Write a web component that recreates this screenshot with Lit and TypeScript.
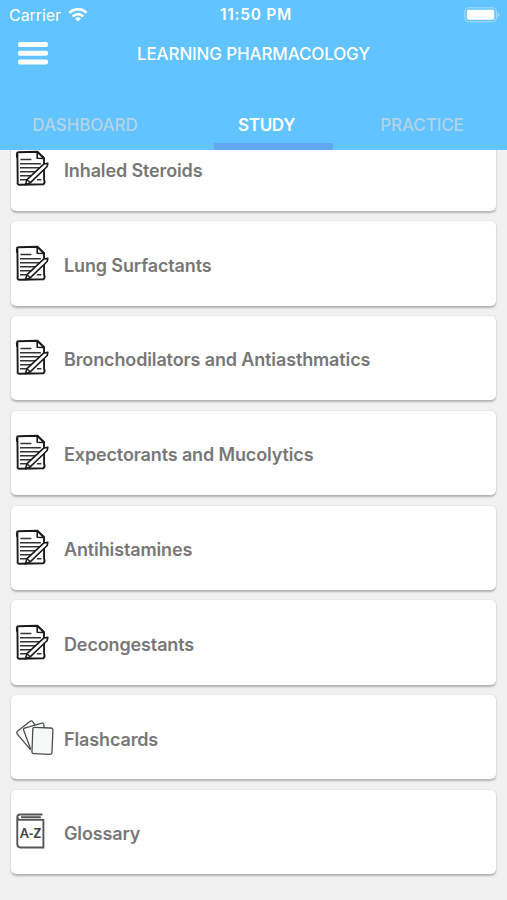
import { LitElement, html, css, svg } from "lit";
import { customElement, property } from "lit/decorators.js";

const noteIcon = svg`
  <g transform="translate(-.6 .9)">
  <path d="M2 3 Q1 1.3 3 1.3 L22 .8 L28.6 7 L28.7 29 Q30 31.5 28 33.4 L4 33.8 Q1.6 34 2.3 31 Z" fill="#fff" stroke="#1a1a1a" stroke-width="1.9" stroke-linejoin="round"/>
  <path d="M1.2 3 L1.7 7 M21.8 1 L21.8 7.4 L28.4 7.6 Z" fill="#fff" stroke="#1a1a1a" stroke-width="1.6" stroke-linejoin="round"/>
  <path d="M5 8.6H16 M4.6 12.8H25.5 M4.6 16.8H25 M4.6 20.8H21 M4.6 24.8H17 M4.6 28.8H13 M21.5 28.8H26" stroke="#333" stroke-width="1.5" fill="none"/>
  <path d="M28 13.4 L32.4 12.4 L31.8 15.6 L15 31.8 L10 33.8 L11.6 28.8 Z" fill="#fff" stroke="#1a1a1a" stroke-width="1.6" stroke-linejoin="round"/>
  <path d="M11.6 28.8 L15 31.8" stroke="#1a1a1a" stroke-width="1.2"/>
  </g>
`;

const cardsIcon = svg`
  <g fill="#fff" stroke="#4a4f50" stroke-width="1.3" transform="translate(0 -.9)">
    <path d="M14.4 31.5 L1 15.6 Q.2 14.2 1.4 13.2 L14.2 3.2 Q15.8 2.2 16.8 3.8 L20 8"/>
    <path d="M14.8 31.4 L7.6 12 Q7.2 10.4 8.6 9.9 L26 5 Q27.2 4.8 27.6 6 L28.4 10"/>
    <path d="M18.8 9.2 L34.9 9.9 Q37 10 36.9 12 L36 34 Q35.9 36.4 33.8 36.3 L18 35.6 Q15.9 35.5 16 33.4 L16.8 11.2 Q16.9 9.1 18.8 9.2 Z" fill="#f7f9f8"/>
  </g>
`;

const bookIcon = svg`
  <g transform="translate(0 -.1)">
  <path d="M26.5 1.6 H4 Q1.3 1.6 1.3 4.2 V31.2 Q1.3 34.6 4.4 34.6 H27.4 V7 H4.2 Q1.5 7 1.5 4.4 M5 4.4 H24.8" fill="none" stroke="#555" stroke-width="1.9"/>
  <g fill="#444" font-family="Lato, sans-serif" font-weight="900" font-size="13.5">
    <text x="14.6" y="25.2" text-anchor="middle" textLength="21" lengthAdjust="spacingAndGlyphs">A-Z</text>
  </g>
  </g>
`;

const icons = { note: noteIcon, cards: cardsIcon, book: bookIcon };
type IconName = keyof typeof icons;

@customElement("topic-card")
class TopicCard extends LitElement {
  @property() label = "";
  @property() icon: IconName = "note";

  static styles = css`
    :host {
      display: flex;
      align-items: center;
      flex: none;
      box-sizing: border-box;
      height: 84.3px;
      padding: 4.4px 5px 0;
      background: #fff;
      border-radius: 5px;
      box-shadow: 0 1.5px 2px rgba(0, 0, 0, 0.25), 0 0 1.5px rgba(0, 0, 0, 0.1);
    }
    svg {
      flex: none;
      width: 38px;
      height: 38px;
      margin: -4px 10px 0 0;
      overflow: visible;
    }
    .label {
      font: 600 18px/24px Inter, sans-serif;
      letter-spacing: -0.13px;
      color: #777;
      white-space: nowrap;
    }
  `;

  render() {
    return html`<svg viewBox="0 0 38 38">${icons[this.icon]}</svg><span class="label">${this.label}</span>`;
  }
}

@customElement("app-root")
class AppRoot extends LitElement {
  static styles = css`
    :host {
      display: flex;
      flex-direction: column;
      height: 900px;
      overflow: hidden;
      background: #f1f1f1;
      font-family: Inter, sans-serif;
      color: #fff;
    }
    header {
      flex: none;
      height: 150px;
      display: flex;
      flex-direction: column;
      background: #61c3ff;
      z-index: 1;
    }
    .status, .bar {
      display: grid;
      grid-template-columns: 1fr auto 1fr;
      align-items: center;
    }
    .status { height: 29px; padding: 0 7px 0 9px; font-size: 16px; }
    .carrier { display: flex; align-items: center; gap: 7px; letter-spacing: -0.05px; }
    .wifi { width: 20px; height: 14px; }
    .time { font-weight: 600; font-size: 15.5px; letter-spacing: 0.75px; margin-left: 3px; line-height: 20px; }
    .battery { width: 36px; height: 16px; justify-self: end; }
    .bar { height: 48px; padding: 0 18px; }
    .menu { width: 30px; height: 23px; }
    .title { font-size: 17px; font-weight: 550; letter-spacing: -0.14px; padding-top: 1px; }
    .tabs {
      margin-top: auto;
      display: grid;
      grid-template-columns: 170px 1fr 170px;
      height: 52px;
    }
    .tab {
      display: flex;
      flex-direction: column;
      align-items: center;
      justify-content: space-between;
      padding-top: 14.5px;
      font-size: 17px;
      line-height: 24px;
      font-weight: 550;
      letter-spacing: -0.1px;
      color: #b4d3e6;
    }
    .active { color: #fff; font-weight: 600; letter-spacing: -0.3px; padding-left: 26px; }
    .line { width: 119px; height: 7px; margin-left: 14px; align-self: center; background: #61a8f4; }
    main {
      display: flex;
      flex-direction: column;
      gap: 10.5px;
      margin-top: -23.6px;
      padding: 0 11px;
    }
  `;

  render() {
    const topics: [string, IconName][] = [
      ["Inhaled Steroids", "note"],
      ["Lung Surfactants", "note"],
      ["Bronchodilators and Antiasthmatics", "note"],
      ["Expectorants and Mucolytics", "note"],
      ["Antihistamines", "note"],
      ["Decongestants", "note"],
      ["Flashcards", "cards"],
      ["Glossary", "book"],
    ];
    return html`
      <header>
        <div class="status">
          <span class="carrier">Carrier
            <svg class="wifi" viewBox="0 0 20 14" fill="none" stroke="#fff" stroke-width="2.6">
              <path d="M1.3 4.8 Q10 -2.6 18.7 4.8 M4.7 8.4 Q10 3.8 15.3 8.4"/>
              <path d="M10 13.5 L7 10.6 Q10 8 13 10.6 Z" fill="#fff" stroke="none"/>
            </svg>
          </span>
          <span class="time">11:50 PM</span>
          <svg class="battery" viewBox="0 0 36 16">
            <rect x=".8" y=".8" width="31.6" height="14" rx="3.6" fill="none" stroke="#a8ddff" stroke-width="1"/>
            <rect x="2.8" y="2.8" width="27.5" height="10" rx="1.7" fill="#fff"/>
            <path d="M33.8 5.3 Q37 7.8 33.8 10.3 Z" fill="#a8ddff"/>
          </svg>
        </div>
        <div class="bar">
          <svg class="menu" viewBox="0 0 30 23" fill="#fff">
            <rect width="30" height="5" rx="2"/>
            <rect y="8.8" width="30" height="5" rx="2"/>
            <rect y="17.4" width="30" height="5" rx="2"/>
          </svg>
          <span class="title">LEARNING PHARMACOLOGY</span>
        </div>
        <nav class="tabs">
          <div class="tab">DASHBOARD</div>
          <div class="tab active">STUDY<div class="line"></div></div>
          <div class="tab">PRACTICE</div>
        </nav>
      </header>
      <main>${topics.map(([label, icon]) => html`<topic-card .label=${label} .icon=${icon}></topic-card>`)}</main>
    `;
  }
}
